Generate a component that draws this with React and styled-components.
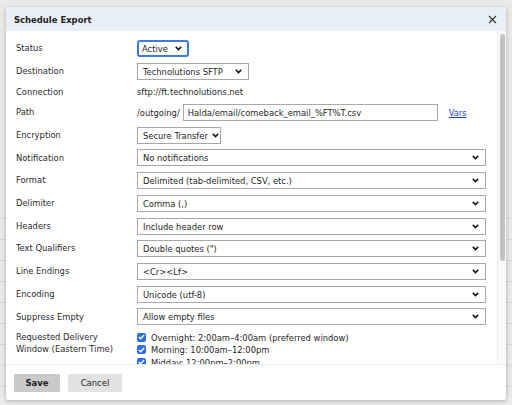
import React from 'react'
import styled, { createGlobalStyle, css } from 'styled-components'

const GlobalStyle = createGlobalStyle`
    html, body {
        margin: 0;
        padding: 0;
        background: #e9e9e9;
    }
    * {
        box-sizing: border-box;
    }
`;

const Page = styled.div`
    position: relative;
    width: 512px;
    height: 405px;
    overflow: hidden;
    background: #e9e9e9;
    font-family: "DejaVu Sans", Verdana, sans-serif;
    font-stretch: condensed;
    font-size: 9.3px;
    color: #262626;
`;

const Backdrop = styled.div`
    display: flex;
    flex-direction: column;
    padding-top: 218px;
    div{
        height: 21px;
        border-top: 1px solid #d4d4d4;
    }
`;

const Dialog = styled.div`
    position: absolute;
    left: 6px;
    top: 7px;
    width: 500px;
    height: 393px;
    background: #fff;
    border-radius: 2px;
    box-shadow: 0 1px 4px rgba(0, 0, 0, 0.25);
    display: flex;
    flex-direction: column;
    overflow: hidden;
`;

const Header = styled.div`
    height: 24px;
    flex: none;
    background: #e8eff6;
    display: flex;
    align-items: center;
    justify-content: space-between;
    padding: 0 8px 0 8px;
    font-weight: bold;
    font-size: 9.4px;
    color: #1f1f1f;
`;

const CloseButton = styled.button`
    border: none;
    background: none;
    padding: 0;
    width: 12px;
    height: 12px;
    display: flex;
    align-items: center;
    justify-content: center;
    cursor: pointer;
`;

const Body = styled.div`
    flex: 1;
    display: flex;
    min-height: 0;
    overflow: hidden;
`;

const Form = styled.div`
    flex: 1;
    padding: 9px 0 0 10px;
    display: flex;
    flex-direction: column;
    gap: 5.7px;
`;

const ScrollTrack = styled.div`
    width: 9px;
    flex: none;
    background: #fafafa;
    border-left: 1px solid #ececec;
    padding: 3px 1px 0 2px;
`;

const ScrollThumb = styled.div`
    height: 227px;
    border-radius: 3px;
    background: #c2c2c2;
`;

const Row = styled.div`
    display: grid;
    grid-template-columns: 121px 1fr;
    align-items: ${p => p.$top ? 'start' : 'center'};
    min-height: ${p => p.$h || 17}px;
`;

const Label = styled.div`
    line-height: 12.5px;
    color: #2a2a2a;
`;

const Select = styled.div`
    width: ${p => p.$w}px;
    height: 17px;
    display: flex;
    align-items: center;
    justify-content: space-between;
    border: 1px solid #a8a8a8;
    background: #fff;
    padding: 0 6px 0 5px;
    white-space: nowrap;
    ${p => p.$focus && css`
        border: 2px solid #3f7ae0;
        border-radius: 3px;
        padding: 0 5px 0 3px;
    `}
`;

const Chevron = styled.svg`
    flex: none;
    margin-left: 4px;
`;

const Inline = styled.div`
    display: flex;
    align-items: center;
`;

const Prefix = styled.span`
    margin-right: 3px;
`;

const TextInput = styled.div`
    width: 255px;
    height: 17px;
    border: 1px solid #a8a8a8;
    padding: 0 4px;
    display: flex;
    align-items: center;
    white-space: nowrap;
`;

const VarsLink = styled.a`
    margin-left: 11px;
    color: #1a3fd6;
    text-decoration: underline;
`;

const Options = styled.div`
    display: flex;
    flex-direction: column;
`;

const Option = styled.label`
    display: flex;
    align-items: center;
    height: 12.5px;
    white-space: nowrap;
`;

const Check = styled.span`
    width: 9px;
    height: 9px;
    flex: none;
    border-radius: 2px;
    background: #2f6fdd;
    margin-right: 5px;
    display: flex;
    align-items: center;
    justify-content: center;
`;

const Footer = styled.div`
    height: 36px;
    flex: none;
    border-top: 1px solid #ededed;
    display: flex;
    align-items: center;
    gap: 8px;
    padding: 0 0 0 8px;
`;

const Button = styled.button`
    height: 18px;
    width: ${p => p.$w}px;
    border: none;
    border-radius: 1px;
    background: ${p => p.$primary ? '#c9c9c9' : '#e2e2e2'};
    font-family: inherit;
    font-stretch: condensed;
    font-size: 9.4px;
    font-weight: ${p => p.$primary ? 'bold' : 'normal'};
    color: #222;
    padding: 0;
`;

const ChevronIcon = () => (
    <Chevron width="7" height="5" viewBox="0 0 7 5">
        <polyline points="0.8,0.9 3.5,3.6 6.2,0.9" fill="none" stroke="#111" strokeWidth="1.5" />
    </Chevron>
);

const Dropdown = ({ value, w = 349, focus }) => (
    <Select $w={w} $focus={focus}>
        <span>{value}</span>
        <ChevronIcon />
    </Select>
);

const CheckItem = ({ children }) => (
    <Option>
        <Check>
            <svg width="7" height="6" viewBox="0 0 7 6">
                <polyline points="0.8,3 2.7,4.8 6.2,0.9" fill="none" stroke="#fff" strokeWidth="1.4" />
            </svg>
        </Check>
        {children}
    </Option>
);

const selects = [
    ['Notification', 'No notifications'],
    ['Format', 'Delimited (tab-delimited, CSV, etc.)'],
    ['Delimiter', 'Comma (,)'],
    ['Headers', 'Include header row'],
    ['Text Qualifiers', 'Double quotes (")'],
    ['Line Endings', '<Cr><Lf>'],
    ['Encoding', 'Unicode (utf-8)'],
    ['Suppress Empty', 'Allow empty files'],
];

const App = () => {
    return(
        <Page>
            <GlobalStyle />
            <Backdrop>
                {Array.from({ length: 9 }).map((_, i) => <div key={i} />)}
            </Backdrop>
            <Dialog>
                <Header>
                    <span>Schedule Export</span>
                    <CloseButton>
                        <svg width="9" height="9" viewBox="0 0 9 9">
                            <path d="M1 1L8 8M8 1L1 8" stroke="#333" strokeWidth="1.1" />
                        </svg>
                    </CloseButton>
                </Header>
                <Body>
                    <Form>
                        <Row>
                            <Label>Status</Label>
                            <Dropdown value="Active" w={52} focus />
                        </Row>
                        <Row>
                            <Label>Destination</Label>
                            <Dropdown value="Technolutions SFTP" w={112} />
                        </Row>
                        <Row $h={13}>
                            <Label>Connection</Label>
                            <span>sftp://ft.technolutions.net</span>
                        </Row>
                        <Row>
                            <Label>Path</Label>
                            <Inline>
                                <Prefix>/outgoing/</Prefix>
                                <TextInput>Halda/email/comeback_email_%FT%T.csv</TextInput>
                                <VarsLink href="#">Vars</VarsLink>
                            </Inline>
                        </Row>
                        <Row>
                            <Label>Encryption</Label>
                            <Dropdown value="Secure Transfer" w={84} />
                        </Row>
                        {selects.map(([label, value]) => (
                            <Row key={label}>
                                <Label>{label}</Label>
                                <Dropdown value={value} />
                            </Row>
                        ))}
                        <Row $top>
                            <Label>Requested Delivery<br />Window (Eastern Time)</Label>
                            <Options>
                                <CheckItem>Overnight: 2:00am–4:00am (preferred window)</CheckItem>
                                <CheckItem>Morning: 10:00am–12:00pm</CheckItem>
                                <CheckItem>Midday: 12:00pm–2:00pm</CheckItem>
                            </Options>
                        </Row>
                    </Form>
                    <ScrollTrack>
                        <ScrollThumb />
                    </ScrollTrack>
                </Body>
                <Footer>
                    <Button $primary $w={46}>Save</Button>
                    <Button $w={54}>Cancel</Button>
                </Footer>
            </Dialog>
        </Page>
    )
}

export default App
